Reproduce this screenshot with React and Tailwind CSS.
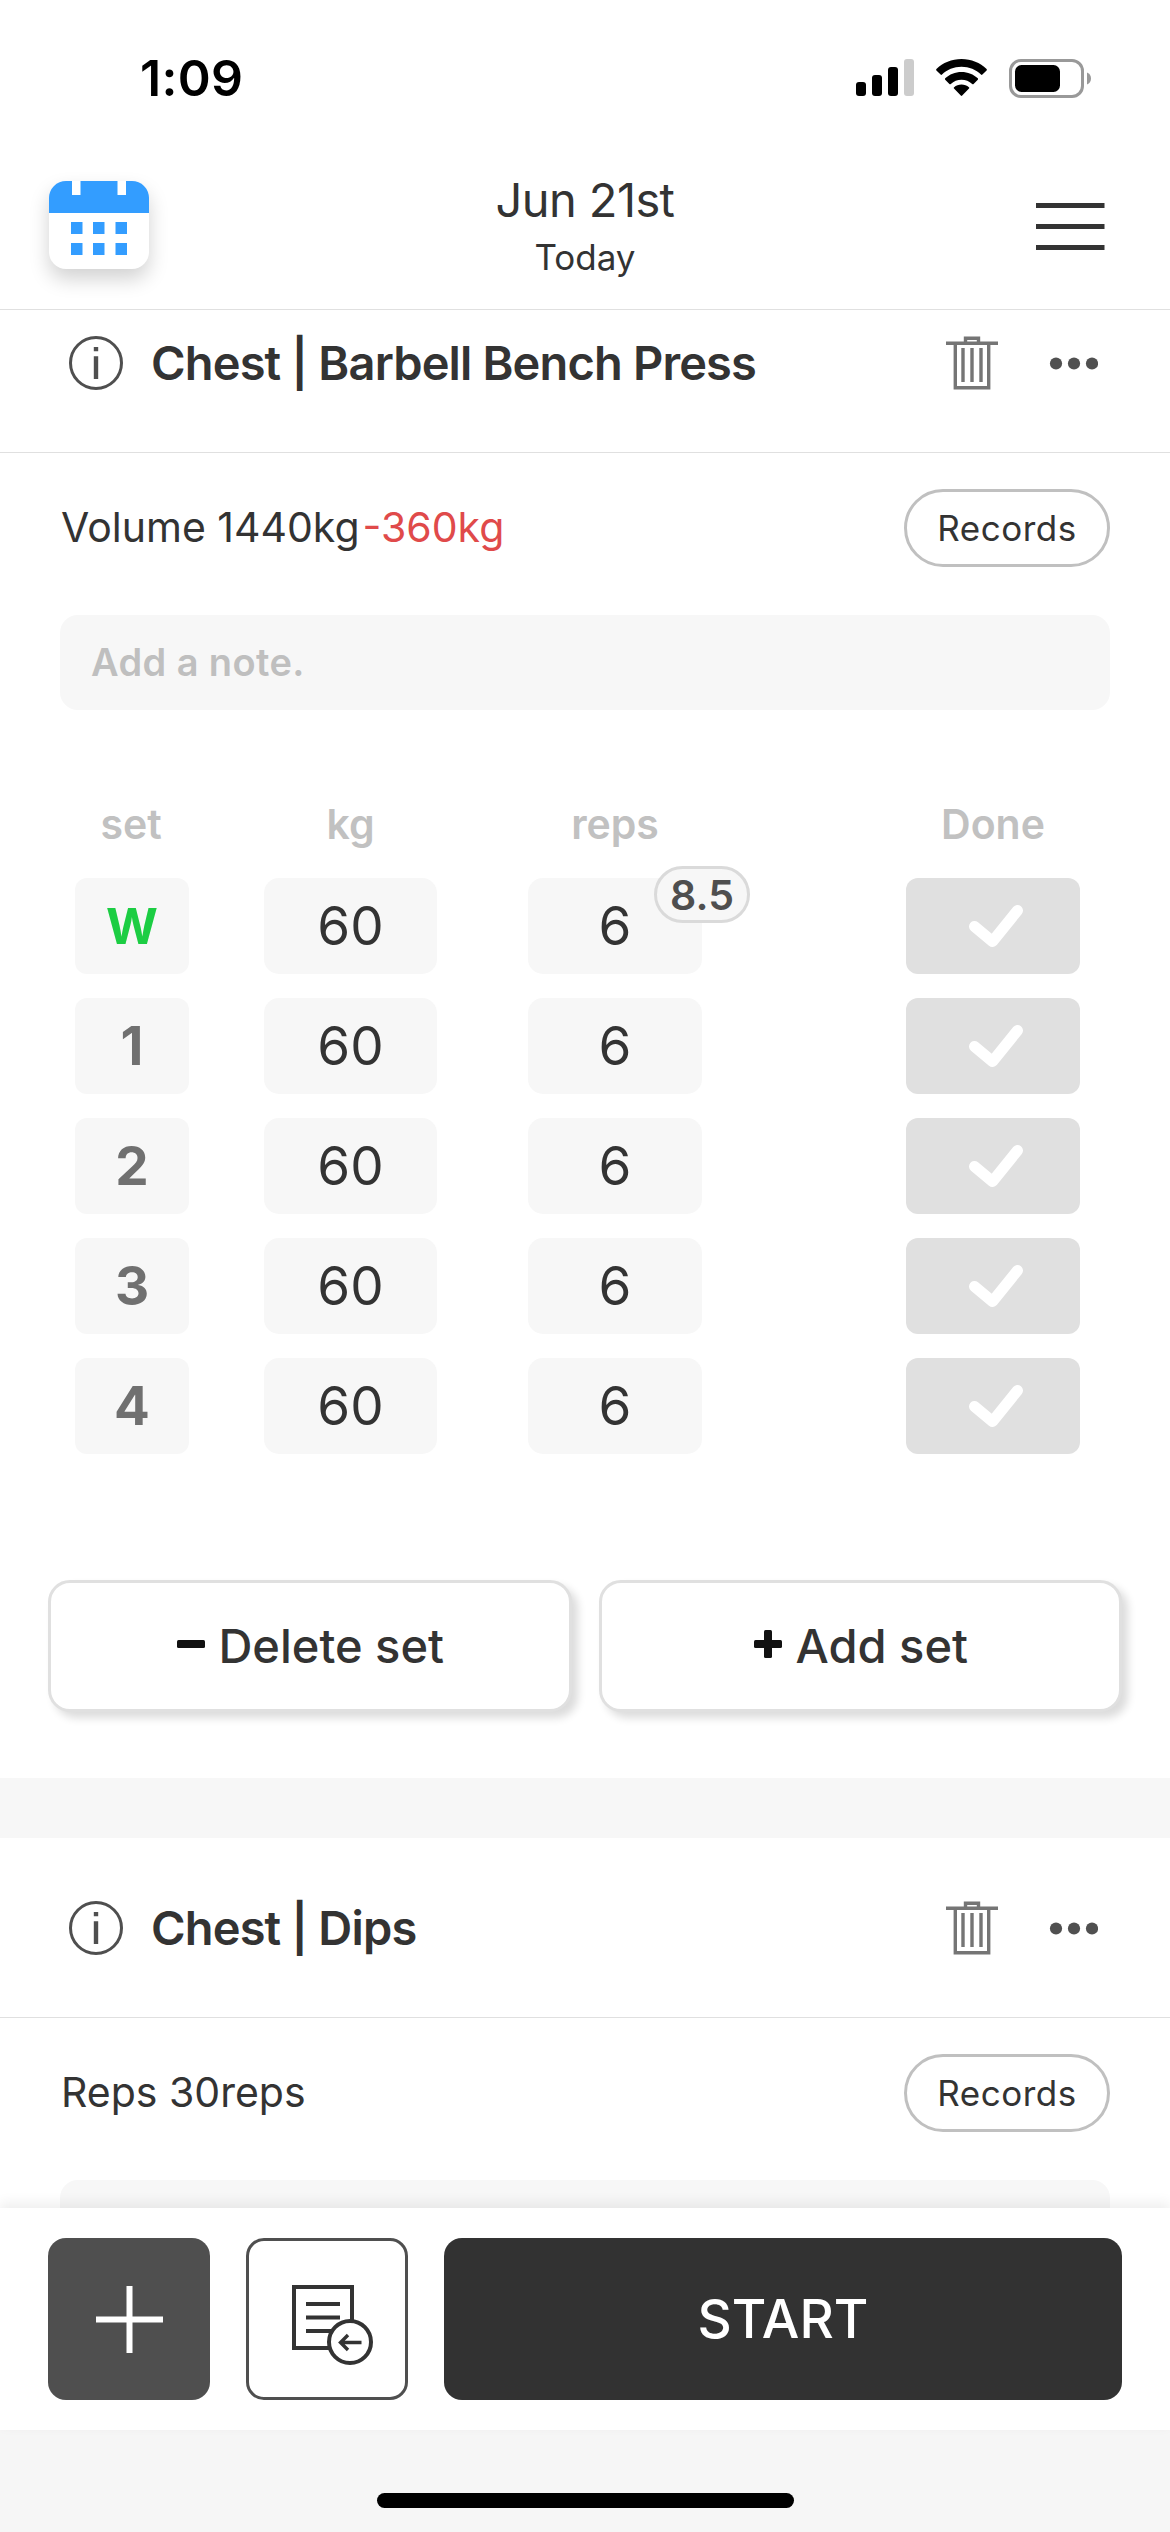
const sets = [
    { label: "W", kg: 60, reps: 6, rpe: "8.5", warmup: true },
    { label: "1", kg: 60, reps: 6 },
    { label: "2", kg: 60, reps: 6 },
    { label: "3", kg: 60, reps: 6 },
    { label: "4", kg: 60, reps: 6 },
];

function StatusBar() {
    return (
        <div className="flex h-[156px] shrink-0 items-center justify-between pl-[140px] pr-[79px]">
            <span className="text-[50px] leading-none font-semibold tracking-[0.3px] text-black">1:09</span>
            <div className="flex items-center gap-[22px]">
                <svg width="58" height="38" viewBox="0 0 58 38">
                    <rect x="0" y="23" width="10" height="14" rx="3" />
                    <rect x="16" y="16" width="10" height="21" rx="3" />
                    <rect x="32" y="8" width="10" height="29" rx="3" />
                    <rect x="48" y="0" width="10" height="37" rx="3" fill="#cccccc" />
                </svg>
                <svg width="51" height="38" viewBox="0 0 51 38">
                    <path d="M25.5 0C35.3 0 44.2 3.8 50.6 10c.4.4.4 1 0 1.400l-4.200 4.200c-.4.4-1 .4-1.400 0C40 10.600 33.100 7.700 25.500 7.700S11 10.600 6 15.600c-.4.4-1 .4-1.400 0L.4 11.400c-.4-.4-.4-1 0-1.400C6.800 3.800 15.700 0 25.500 0Z" />
                    <path d="M25.500 13c6.300 0 12 2.400 16.300 6.300.4.4.4 1 0 1.400l-4.200 4.200c-.4.4-1 .4-1.400 0-2.900-2.600-6.600-4.200-10.700-4.200s-7.800 1.600-10.700 4.200c-.4.4-1 .4-1.400 0L9.200 20.700c-.4-.4-.4-1 0-1.400C13.500 15.400 19.200 13 25.500 13Z" />
                    <path d="M25.500 25.600c2.800 0 5.400 1 7.400 2.600.4.4.5 1 .1 1.400l-6.800 7c-.4.4-1 .4-1.400 0l-6.800-7c-.4-.4-.3-1 .1-1.400 2-1.600 4.600-2.600 7.400-2.600Z" />
                </svg>
                <svg width="82" height="39" viewBox="0 0 82 39">
                    <rect x="1.500" y="1.500" width="72" height="36" rx="10.500" fill="none" stroke="#999999" strokeWidth="3" />
                    <rect x="6" y="6" width="45" height="27" rx="6.500" />
                    <path d="M78 13.500c2.600 1 4 3.200 4 6s-1.400 5-4 6Z" fill="#999999" />
                </svg>
            </div>
        </div>
    );
}

function CalendarIcon() {
    return (
        <div className="h-[88px] w-[100px] overflow-hidden rounded-[17px] bg-white shadow-[0_10px_20px_rgba(0,0,0,0.18)]">
            <svg width="100" height="88" viewBox="0 0 100 88">
                <rect width="100" height="32" fill="#339dff" />
                <path d="M23 0h8.500v14H23zM68.500 0H77v14h-8.500z" fill="#fff" />
                <path d="M22 41h11.500v12H22zM44 41h11.500v12H44zM66.500 41H78v12H66.500zM22 62h11.500v12H22zM44 62h11.500v12H44zM66.500 62H78v12H66.500z" fill="#339dff" />
            </svg>
        </div>
    );
}

function Header() {
    return (
        <header className="relative z-10 grid h-[154px] shrink-0 grid-cols-[100px_1fr_100px] border-b border-[#e0e0e0] bg-white px-[49px]">
            <div className="pt-[25px]">
                <CalendarIcon />
            </div>
            <div className="flex flex-col items-center pt-[15px]">
                <span className="text-[47px] leading-[58px] tracking-[-0.6px]">Jun 21st</span>
                <span className="text-[35px] leading-[56px]">Today</span>
            </div>
            <svg className="mt-[46px] ml-[15px]" width="69" height="48" viewBox="0 0 69 48">
                <path d="M0 3.500h68.500M0 24.500h68.500M0 45.500h68.500" stroke="#333333" strokeWidth="5" />
            </svg>
        </header>
    );
}

function SectionHeader({ title }) {
    return (
        <div className="flex h-[180px] items-center border-b border-[#e0e0e0] pt-[1px] pr-[72px] pl-[69px]">
            <svg width="54" height="54" viewBox="0 0 54 54">
                <circle cx="27" cy="27" r="25.500" fill="none" stroke="#4f4f4f" strokeWidth="3" />
                <path d="M24.800 11h4.400v4.300h-4.400zM24.800 20.300h4.400V43h-4.400z" fill="#4f4f4f" />
            </svg>
            <h2 className="ml-[28px] flex-1 text-[47px] leading-[46px] font-semibold tracking-[-0.85px] whitespace-nowrap">{title}</h2>
            <svg width="52" height="54" viewBox="0 0 52 54" fill="none" stroke="#757575" strokeWidth="3.400">
                <path d="M0 7.200h52M19.500 7V2.200h13V7M9.300 8v43.800h33.400V8M17 12v34M26 12v34M35 12v34" />
            </svg>
            <svg className="ml-[51px]" width="49" height="13" viewBox="0 0 49 13" fill="#505050">
                <circle cx="7" cy="6.500" r="6.100" />
                <circle cx="25" cy="6.500" r="6.100" />
                <circle cx="43" cy="6.500" r="6.100" />
            </svg>
        </div>
    );
}

function Summary({ children }) {
    return (
        <div className="mt-[36px] flex h-[78px] items-center justify-between pr-[60px] pl-[61px]">
            <p className="pb-[1px] text-[41px] leading-none">{children}</p>
            <button className="h-[78px] w-[206px] rounded-full border-[3px] border-[#c0c0c0] text-[35px] leading-none tracking-[0.5px]">
                Records
            </button>
        </div>
    );
}

function Note({ placeholder }) {
    return (
        <div className="mx-[60px] mt-[48px] flex h-[95px] items-center rounded-[18px] bg-[#f7f7f7] px-[31px] text-[38px] font-semibold tracking-[0.4px] text-[#bfbfbf]">
            {placeholder}
        </div>
    );
}

function SetRow({ set }) {
    return (
        <div className="flex h-[96px] text-[53px] leading-[54px]">
            <div className={`flex w-[114px] items-center justify-center rounded-[12px] bg-[#f7f7f7] font-bold ${set.warmup ? "text-[50px] text-[#1ccd43]" : "text-[#707070]"}`}>
                {set.label}
            </div>
            <div className="ml-[75px] flex w-[173px] items-center justify-center rounded-[15px] bg-[#f7f7f7]">{set.kg}</div>
            <div className="relative ml-[91px] flex w-[174px] items-center justify-center rounded-[15px] bg-[#f7f7f7]">
                {set.reps}
                {set.rpe && (
                    <span className="absolute top-[-12px] left-[126px] flex h-[57px] w-[96px] items-center justify-center rounded-full border-[3px] border-[#dadada] bg-[#f7f7f7] text-[41px] font-semibold text-[#4f4f4f]">
                        {set.rpe}
                    </span>
                )}
            </div>
            <button className="ml-[204px] flex w-[174px] items-center justify-center rounded-[12px] bg-[#e0e0e0]">
                <svg className="ml-[6px]" width="56" height="44" viewBox="0 0 56 44">
                    <path d="M6.500 22.500 24.500 37.500 49.500 6.500" fill="none" stroke="#fff" strokeWidth="11" strokeLinecap="round" strokeLinejoin="round" />
                </svg>
            </button>
        </div>
    );
}

function SetButton({ text, plus }) {
    return (
        <button className="flex flex-1 items-center justify-center rounded-[22px] border-[3px] border-[#e0e0e0] bg-white pb-[2px] pl-[2px] text-[47px] leading-none font-medium shadow-[6px_6px_8px_rgba(0,0,0,0.14)]">
            <svg className="mr-[13px] mb-[2px]" width="28" height="28" viewBox="0 0 28 28" fill="#111111">
                <rect x="0" y="10" width="28" height="8" rx="1.500" />
                {plus && <rect x="10" y="0" width="8" height="28" rx="1.500" />}
            </svg>
            {text}
        </button>
    );
}

function BottomBar() {
    return (
        <div className="relative z-10 flex h-[222px] shrink-0 gap-[36px] bg-white px-[48px] pt-[30px] shadow-[0_-5px_12px_rgba(0,0,0,0.07)]">
            <button className="flex h-[162px] w-[162px] items-center justify-center rounded-[18px] bg-[#4f4f4f]">
                <svg width="67" height="67" viewBox="0 0 67 67">
                    <path d="M33.500 0v67M0 33.500h67" stroke="#fff" strokeWidth="6" />
                </svg>
            </button>
            <button className="flex h-[162px] w-[162px] items-center justify-center rounded-[18px] border-[3px] border-[#4f4f4f]">
                <svg className="mt-[13px] ml-[12px]" width="82" height="81" viewBox="0 0 82 81" fill="none" stroke="#333333" strokeWidth="4">
                    <path d="M2 2h58v61H2zM14 19h34M14 32.500h34M14 46h34" />
                    <circle cx="58" cy="57" r="21" fill="#fff" />
                    <path d="M69.500 57.500H48M56 50l-7.500 7.500 7.500 7.500" strokeWidth="3.400" />
                </svg>
            </button>
            <button className="h-[162px] flex-1 rounded-[18px] bg-[#323232] text-[53px] leading-none font-medium text-white">START</button>
        </div>
    );
}

export default function App() {
    return (
        <div className="flex h-[2532px] w-[1170px] flex-col overflow-hidden bg-white font-['Inter',sans-serif] text-[#333333]">
            <StatusBar />
            <Header />

            <main className="flex h-[1898px] shrink-0 flex-col overflow-hidden">
                <section className="-mt-[37px] h-[1505px] shrink-0">
                    <SectionHeader title="Chest | Barbell Bench Press" />
                    <Summary>
                        Volume 1440kg<span className="ml-[3px] text-[#e04a4a]">-360kg</span>
                    </Summary>
                    <Note placeholder="Add a note." />

                    <div className="mt-[84px] flex pl-[75px] text-[41px] leading-[60px] font-semibold text-[#c1c1c1]">
                        <span className="w-[112px] text-center">set</span>
                        <span className="ml-[77px] w-[173px] text-center">kg</span>
                        <span className="ml-[91px] w-[174px] text-center">reps</span>
                        <span className="ml-[204px] w-[174px] text-center">Done</span>
                    </div>
                    <div className="mt-[24px] flex flex-col gap-[24px] pl-[75px]">
                        {sets.map((set) => (
                            <SetRow key={set.label} set={set} />
                        ))}
                    </div>

                    <div className="mt-[126px] flex h-[132px] gap-[27px] px-[48px]">
                        <SetButton text="Delete set" />
                        <SetButton text="Add set" plus />
                    </div>
                </section>

                <div className="h-[60px] shrink-0 bg-[#f7f7f7]" />

                <section className="shrink-0">
                    <SectionHeader title="Chest | Dips" />
                    <Summary>Reps 30reps</Summary>
                    <Note />
                </section>
            </main>

            <BottomBar />
            <footer className="flex flex-1 items-end justify-center bg-[#f6f6f6] pb-[24px]">
                <div className="h-[15px] w-[417px] rounded-full bg-black" />
            </footer>
        </div>
    );
}
